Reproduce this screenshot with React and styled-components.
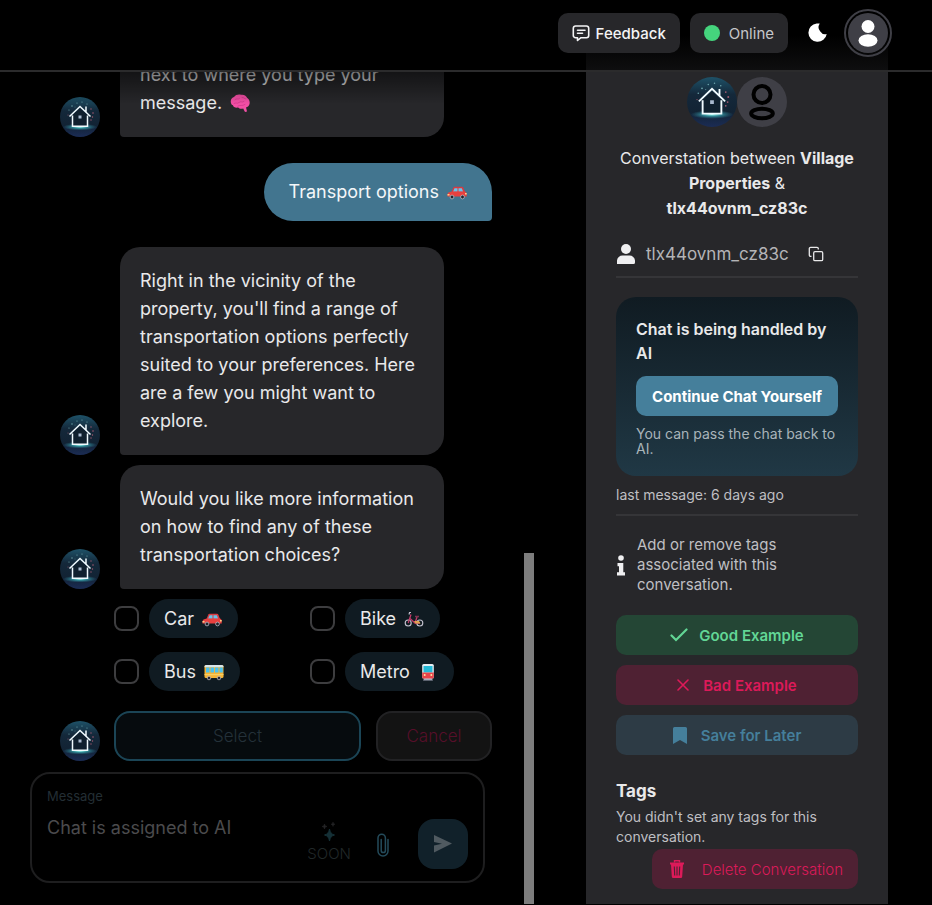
import React, { useId } from "react";
import styled, { createGlobalStyle, css } from "styled-components";

const GlobalStyle = createGlobalStyle`
  *, *::before, *::after { box-sizing: border-box; }
  body {
    margin: 0;
    background: #000;
    color: #e9e9ea;
    font-family: Inter, "Open Sans", sans-serif;
    overflow: hidden;
  }
  button, input, textarea { font: inherit; color: inherit; }
  button { border: 0; background: none; padding: 0; cursor: pointer; }
  svg { display: block; flex: none; }
  h1, h2, h3, p { margin: 0; }
`;

/* ---------- layout ---------- */

const Page = styled.div`
  display: flex;
  flex-direction: column;
  height: 100vh;
  padding-bottom: 1px;
`;

const Header = styled.header`
  flex: none;
  display: flex;
  align-items: center;
  justify-content: flex-end;
  height: 72px;
  padding: 0 40px 4px 0;
  border-bottom: 2px solid #2b2b2c;
  background: linear-gradient(to bottom, transparent 50%, #0e0e0f) right 44px top / 302px 100% no-repeat;
  background-clip: padding-box;
  background-origin: padding-box;
`;

const Main = styled.main`
  flex: 1;
  min-height: 0;
  display: flex;
  padding-right: 44px;
`;

const Chat = styled.section`
  flex: 1;
  min-width: 0;
  display: flex;
  flex-direction: column;
  justify-content: flex-end;
  overflow: hidden;
  position: relative;
  padding-bottom: 21px;
  &::before {
    content: "";
    position: absolute;
    inset: 0 0 auto 0;
    height: 32px;
    background: linear-gradient(to bottom, rgba(0, 0, 0, 0.5), rgba(0, 0, 0, 0));
    z-index: 1;
  }
`;

const ScrollTrack = styled.div`
  flex: none;
  width: 10px;
  margin-right: 52px;
  display: flex;
  align-items: flex-end;
`;

const ScrollThumb = styled.div`
  width: 100%;
  height: 42.2%;
  background: #7d7d7d;
`;

/* ---------- header ---------- */

const HeaderButton = styled.button`
  display: flex;
  align-items: center;
  justify-content: center;
  gap: ${(p) => p.$gap}px;
  height: 40px;
  margin-right: 10px;
  padding: 0 14px;
  border-radius: 10px;
  background: #27272a;
  color: ${(p) => p.$color};
  font-size: 15px;
  font-weight: ${(p) => p.$weight};
`;

const StatusDot = styled.span`
  width: 16px;
  height: 16px;
  border-radius: 50%;
  background: #45d47d;
`;

const ThemeButton = styled.button`
  padding: 10px;
`;

const ProfileButton = styled.button`
  display: grid;
  place-items: center;
  width: 48px;
  height: 48px;
  margin-left: 6px;
  border: 2px solid #3f3f46;
  border-radius: 50%;
`;

const ProfileFace = styled.span`
  display: grid;
  place-items: center;
  width: 40px;
  height: 40px;
  border-radius: 50%;
  background: #3f3f46;
`;

/* ---------- messages ---------- */

const Thread = styled.div`
  flex: none;
  display: flex;
  flex-direction: column;
  padding: 0 32px 0 60px;
`;

const MessageRow = styled.div`
  display: flex;
  align-items: flex-end;
  gap: 20px;
  margin-bottom: ${(p) => p.$after}px;
  justify-content: ${(p) => (p.$own ? "flex-end" : "flex-start")};
`;

const Bubble = styled.div`
  padding: 20px;
  line-height: 28px;
  font-size: 18px;
  ${(p) =>
    p.$own
      ? css`
          padding: 15px 25px;
          background: #42758f;
          color: #f4f7f9;
          border-radius: 29px 29px 4px 29px;
        `
      : css`
          width: 324px;
          background: #27272a;
          border-radius: 20px 20px 20px 4px;
        `}
`;

const EmojiSlot = styled.span`
  display: inline-block;
  vertical-align: -4px;
  margin-left: 8px;
`;

const Options = styled.fieldset`
  display: grid;
  grid-template-columns: repeat(2, 196px);
  row-gap: 14px;
  margin: 0 0 20px 54px;
  padding: 0;
  border: 0;
`;

const Option = styled.label`
  display: flex;
  align-items: center;
  gap: 10px;
`;

const Tick = styled.input`
  appearance: none;
  width: 25px;
  height: 25px;
  margin: 0;
  border: 2px solid #3d3d3f;
  border-radius: 8px;
  &:checked { background: #42758f; }
`;

const Pill = styled.span`
  display: flex;
  align-items: center;
  height: 39px;
  padding: 0 16px 0 15px;
  border-radius: 20px;
  background: #101b22;
  font-size: 18px;
`;

const Actions = styled.div`
  flex: 1;
  display: flex;
  gap: 15px;
  margin-left: -6px;
`;

const ActionButton = styled.button`
  height: 50px;
  border-radius: 16px;
  font-size: 17px;
  font-weight: 300;
  ${(p) =>
    p.$primary
      ? css`
          flex: 1;
          border: 2px solid #1b4556;
          background: #060b0e;
          color: #243139;
        `
      : css`
          width: 116px;
          border: 2px solid #222224;
          background: #131313;
          color: #570f2a;
        `}
`;

/* ---------- composer ---------- */

const Composer = styled.form`
  flex: none;
  display: flex;
  align-items: flex-end;
  margin: 0 39px 0 30px;
  padding: 12px 15px;
  height: 111px;
  border: 2px solid #1e1e1f;
  border-radius: 20px;
`;

const Field = styled.label`
  flex: 1;
  min-width: 0;
  align-self: stretch;
  display: flex;
  flex-direction: column;
  gap: 9px;
  color: #232e34;
  font-size: 13px;
  line-height: 20px;
`;

const MessageBox = styled.textarea`
  flex: 1;
  width: 100%;
  padding: 0;
  border: 0;
  outline: 0;
  resize: none;
  background: transparent;
  font-size: 18px;
  line-height: 26px;
  &::placeholder { color: #4b4b4d; opacity: 1; }
`;

const SoonButton = styled.button`
  display: flex;
  flex-direction: column;
  align-items: center;
  gap: 2px;
  margin: 0 26px 5px 0;
  color: #202829;
  font-size: 15px;
  font-weight: 300;
  line-height: 20px;
`;

const AttachButton = styled.button`
  margin: 0 29px 12px 0;
`;

const SendButton = styled.button`
  display: grid;
  place-items: center;
  width: 50px;
  height: 50px;
  border-radius: 16px;
  background: #11212a;
`;

/* ---------- side panel ---------- */

const Side = styled.aside`
  flex: none;
  width: 302px;
  padding: 5px 30px 15px;
  background: #27272a;
  overflow: hidden;
  display: flex;
  flex-direction: column;
`;

const Pair = styled.div`
  display: flex;
  justify-content: center;
`;

const GuestAvatar = styled.div`
  display: grid;
  place-items: center;
  width: 50px;
  height: 50px;
  border-radius: 50%;
  background: #3f3f46;
`;

const PairTitle = styled.h1`
  margin-top: 19px;
  text-align: center;
  font-size: 16px;
  font-weight: 400;
  line-height: 25px;
`;

const Identity = styled.div`
  display: flex;
  align-items: center;
  height: 57px;
  margin-bottom: 19px;
  padding-top: 10px;
  border-bottom: 2px solid #353538;
  font-size: 17px;
  color: #b4b4b7;
`;

const IdentityName = styled.span`
  margin: 0 19px 0 10px;
`;

const HandlingCard = styled.section`
  padding: 20px;
  border-radius: 20px;
  background: linear-gradient(to bottom, #101b22, #203845);
`;

const CardTitle = styled.h2`
  font-size: 16px;
  font-weight: 600;
  line-height: 24px;
`;

const ContinueButton = styled.button`
  width: 100%;
  height: 40px;
  margin: 11px 0 10px;
  border-radius: 10px;
  background: #457f9b;
  color: #fff;
  font-size: 15px;
  font-weight: 700;
  white-space: nowrap;
`;

const CardNote = styled.p`
  color: #a9b4ba;
  font-size: 14px;
  line-height: 15px;
`;

const LastMessage = styled.p`
  padding: 9px 0 9px;
  border-bottom: 2px solid #353538;
  color: #bfbfc2;
  font-size: 14px;
  line-height: 20px;
`;

const Hint = styled.div`
  display: flex;
  align-items: center;
  gap: 11px;
  margin: 19px 0 20px;
  padding-right: 40px;
  color: #bfbfc2;
  font-size: 15px;
  line-height: 20px;
`;

const tones = {
  good: ["#244635", "#62d695"],
  bad: ["#4f2133", "#dc1a59"],
  save: ["#2d3b45", "#457f9b"],
};

const TagButton = styled.button`
  flex: none;
  display: flex;
  align-items: center;
  justify-content: center;
  gap: ${(p) => p.$gap}px;
  height: 40px;
  padding: 0 15px;
  border-radius: 10px;
  background: ${(p) => tones[p.$tone][0]};
  color: ${(p) => tones[p.$tone][1]};
  font-size: 15px;
  font-weight: 600;
  white-space: nowrap;
`;

const DeleteButton = styled(TagButton)`
  align-self: flex-end;
  padding-left: 18px;
  font-weight: 300;
`;

const TagStack = styled.div`
  display: flex;
  flex-direction: column;
  gap: 10px;
`;

const TagsTitle = styled.h2`
  margin: 24px 0 4px;
  font-size: 17px;
  font-weight: 700;
  line-height: 24px;
`;

const TagsNote = styled.p`
  margin-bottom: 2px;
  color: #bfbfc2;
  font-size: 14px;
  line-height: 20px;
`;

/* ---------- drawings ---------- */

function HouseAvatar({ size = 40 }) {
  const id = useId();
  return (
    <svg width={size} height={size} viewBox="0 0 40 40" role="img" aria-label="Village Properties">
      <defs>
        <linearGradient id={`${id}s`} x1="0" y1="0" x2="0" y2="1">
          <stop offset="0" stopColor="#1e5268" />
          <stop offset="0.35" stopColor="#14283a" />
          <stop offset="0.7" stopColor="#122334" />
          <stop offset="1" stopColor="#1b2c55" />
        </linearGradient>
        <radialGradient id={`${id}g`}>
          <stop offset="0" stopColor="#a6fff5" />
          <stop offset="0.4" stopColor="#3aa5ae" stopOpacity="0.8" />
          <stop offset="1" stopColor="#2a7c92" stopOpacity="0" />
        </radialGradient>
        <clipPath id={`${id}c`}><circle cx="20" cy="20" r="20" /></clipPath>
      </defs>
      <g clipPath={`url(#${id}c)`}>
        <rect width="40" height="40" fill={`url(#${id}s)`} />
        <g fill="#6fa8ae">
          <circle cx="12" cy="9" r="0.7" /><circle cx="17" cy="6" r="0.6" /><circle cx="22" cy="5" r="0.6" />
          <circle cx="9" cy="13" r="0.6" /><circle cx="27" cy="7" r="0.6" /><circle cx="15" cy="10" r="0.4" />
        </g>
        <g fill="#a15a70">
          <circle cx="31" cy="12" r="0.7" /><circle cx="33" cy="16" r="0.8" /><circle cx="32.500" cy="20" r="0.7" />
          <circle cx="31" cy="23" r="0.7" /><circle cx="8" cy="18" r="0.5" />
        </g>
        <ellipse cx="20" cy="30" rx="17" ry="3.500" fill={`url(#${id}g)`} />
        <path d="M12.500 18.500V29h15V18.500L20 11.500Z" fill="#10202e" />
        <path d="M9.500 19.500 20 9.500l10.500 10M26 15V9.500M12.500 18.500V29.300h15V18.500" fill="none" stroke="#f1fbff" strokeWidth="1.500" />
        <path d="M18.500 18.500h3v3h-3z" fill="#a9b9ce" />
      </g>
    </svg>
  );
}

const FeedbackIcon = () => (
  <svg width="18" height="18" viewBox="0 0 18 18" fill="none" stroke="currentColor" strokeWidth="1.600" strokeLinejoin="round" strokeLinecap="round">
    <path d="M3.500 2h11A2.200 2.200 0 0 1 16.700 4.200v7.300a2.200 2.200 0 0 1-2.200 2.200H9L5.500 16.500v-2.800h-2a2.200 2.200 0 0 1-2.200-2.200V4.200A2.200 2.200 0 0 1 3.500 2Z" />
    <path d="M5.500 6.200h7.500M5.500 9.300h5" />
  </svg>
);

const MoonIcon = () => (
  <svg width="20" height="20" viewBox="0 0 20 20" fill="#fff">
    <path d="M9 1A9.200 9.200 0 1 0 19 11.500 5.800 5.800 0 0 1 12.600 9 6.800 6.800 0 0 1 12 1Z" transform="translate(-.3 -.5)" />
  </svg>
);

const FaceIcon = () => (
  <svg width="20" height="28" viewBox="0 0 20 28" fill="#fff">
    <circle cx="10" cy="7.500" r="6.500" />
    <ellipse cx="10" cy="21.500" rx="9.500" ry="6.200" />
  </svg>
);

const GuestIcon = () => (
  <svg width="28" height="38" viewBox="0 0 28 38" fill="none" stroke="#000" strokeWidth="4">
    <circle cx="14" cy="11.500" r="8.500" />
    <ellipse cx="14" cy="30.500" rx="10.800" ry="4.700" />
  </svg>
);

const PersonIcon = () => (
  <svg width="20" height="22" viewBox="0 0 20 22" fill="#efeff1">
    <circle cx="10" cy="6" r="5" />
    <path d="M1 21v-3.500A5.500 5.500 0 0 1 6.500 12.500h7A5.500 5.500 0 0 1 19 17.500V19.500a1.500 1.500 0 0 1-1.500 1.500Z" />
  </svg>
);

const CopyIcon = () => (
  <svg width="16" height="16" viewBox="0 0 16 16" fill="none" stroke="#e9e9ea" strokeWidth="1.300" strokeLinejoin="round">
    <rect x="5.700" y="5.700" width="9" height="9" rx="1.300" />
    <path d="M3.500 10.300H2.600A1.300 1.300 0 0 1 1.300 9V2.600A1.300 1.300 0 0 1 2.600 1.300H9a1.300 1.300 0 0 1 1.300 1.300v.9" />
  </svg>
);

const InfoIcon = () => (
  <svg width="10" height="21" viewBox="0 0 10 21" fill="#efeff1">
    <circle cx="5" cy="3" r="2.800" />
    <path d="M1.500 8h5.800v9.200H9V20.500H1v-3.300h2v-6H1.500Z" />
  </svg>
);

const CheckIcon = () => (
  <svg width="18" height="14" viewBox="0 0 18 14" fill="none" stroke="currentColor" strokeWidth="2.200" strokeLinecap="round">
    <path d="m1.500 7.500 4.500 4.500L16.500 1.500" />
  </svg>
);

const CrossIcon = () => (
  <svg width="12" height="12" viewBox="0 0 12 12" stroke="currentColor" strokeWidth="1.600" strokeLinecap="round">
    <path d="m1 1 10 10M11 1 1 11" />
  </svg>
);

const BookmarkIcon = () => (
  <svg width="14" height="17" viewBox="0 0 14 17" fill="currentColor">
    <path d="M1.500 0h11A1.500 1.500 0 0 1 14 1.500V17l-7-4-7 4V1.500A1.500 1.500 0 0 1 1.500 0Z" />
  </svg>
);

const TrashIcon = () => (
  <svg width="14" height="18" viewBox="0 0 14 18">
    <path d="M4.500 2.500V.8h5v1.700" fill="none" stroke="currentColor" strokeWidth="1.400" />
    <path d="M0 2.500h14v2H13L12.200 16.500A1.500 1.500 0 0 1 10.700 18H3.300A1.500 1.500 0 0 1 1.800 16.500L1 4.500H0Z" fill="currentColor" />
    <path d="M4.300 6.500l.4 9M7 6.500v9M9.700 6.500l-.4 9" stroke="#4f2133" strokeWidth="1.100" />
  </svg>
);

const SparkIcon = () => (
  <svg width="16" height="20" viewBox="0 0 16 20">
    <path d="M8.500 7c.7 3.700 1.800 5 5 6-3.200 1-4.300 2.300-5 6-.7-3.700-1.800-5-5-6 3.200-1 4.300-2.300 5-6Z" fill="#153036" stroke="#153036" strokeWidth="1" />
    <path d="M3.500 2c.3 1.600.8 2.100 2.500 2.500-1.700.4-2.200.9-2.500 2.500C3.200 5.400 2.700 4.900 1 4.500 2.700 4.100 3.200 3.600 3.500 2ZM12 0c.2 1.400.6 1.800 2 2.200-1.400.4-1.800.8-2 2.200-.2-1.400-.6-1.800-2-2.200 1.400-.4 1.800-.8 2-2.200Z" fill="#252527" stroke="#252527" strokeWidth=".6" />
  </svg>
);

const ClipIcon = () => (
  <svg width="12" height="24" viewBox="0 0 12 24" fill="none" stroke="#244b5b" strokeWidth="1.500" strokeLinecap="round">
    <path d="M11 6.500V18a5 5 0 0 1-10 0V5a3.700 3.700 0 0 1 7.400 0v12.500a2.100 2.100 0 0 1-4.200 0V6.500" />
  </svg>
);

const SendIcon = () => (
  <svg width="18" height="18" viewBox="0 0 18 18" fill="#505a60">
    <path d="M0 0 18 8.500 0 17.500V10.500L8 8.700 0 7Z" />
  </svg>
);

const emojiArt = {
  car: (
    <>
      <path d="M4.500 10 6.300 5.600Q6.700 4.800 7.700 4.800H15Q16 4.800 16.400 5.700L18 10Z" fill="#d93a40" />
      <path d="M6 9.800 7.500 6.300h3v3.500ZM11.500 9.800V6.300h3.300l1.400 3.500Z" fill="#68c3ea" />
      <path d="M.5 14.500v-2.300Q.5 10.500 3 10L5 9.500h13.200Q19.700 10 19.700 12v2.500Z" fill="#e8403f" />
      <path d="M.5 12h2v1.500h-2zM18 11h1.700v1.500H18z" fill="#ffd08a" />
      <g fill="#24232b" stroke="#c9c9d6" strokeWidth=".7"><circle cx="5" cy="15" r="1.900" /><circle cx="15.500" cy="15" r="1.900" /></g>
    </>
  ),
  bus: (
    <>
      <rect x=".5" y="3" width="19" height="13" rx="1.500" fill="#f5b335" />
      <path d="M.5 4.500Q.5 3 2 3h16q1.500 0 1.500 1.500v.7H.5Z" fill="#d9e5ea" />
      <path d="M2 5.500h3.500v5H2zM6.500 5.500H10v5H6.500zM11 5.500h3.500v5H11zM15.500 5.500h3.300v5h-3.300z" fill="#4bc1ee" />
      <path d="M.5 12h19v1.200H.5z" fill="#f8ce63" />
      <g fill="#292530" stroke="#ddd" strokeWidth=".6"><circle cx="5" cy="16" r="1.800" /><circle cx="15" cy="16" r="1.800" /></g>
    </>
  ),
  bike: (
    <>
      <g fill="none" stroke="#c4c2cf" strokeWidth="1.100"><circle cx="4.200" cy="14" r="3" /><circle cx="15.800" cy="14" r="3" /><path d="M7 3.500H5.500l-.5 2" /></g>
      <path d="M4.200 14 7 5.500M6 9.500l5 4.500 2-6M11 14h5" fill="none" stroke="#c23b68" strokeWidth="1.300" />
      <path d="M10 12h5l1.500 2.500h-5Z" fill="#e0a451" />
      <path d="M11 7.500h4" stroke="#7c3550" strokeWidth="1.500" />
    </>
  ),
  metro: (
    <>
      <path d="m5 18.500 1.500-2.500h7l1.500 2.500Z" fill="#a5a9bb" />
      <rect x="4.200" y="2" width="11.600" height="14.500" rx="1.500" fill="#e6edf2" />
      <rect x="5.500" y="4" width="9" height="6.500" fill="#25b9d6" />
      <path d="M4.200 10.500h11.600V15Q15.800 16.500 14.300 16.500H5.700Q4.200 16.500 4.200 15Z" fill="#e8444a" />
      <circle cx="6.700" cy="13" r="1" fill="#ffe3a0" /><circle cx="13.300" cy="13" r="1" fill="#ffe3a0" />
    </>
  ),
  brain: (
    <>
      <path d="M1 10C0 7 2 4.500 4 4 5.500 1.500 9 1 11 1.800c3-.6 5.500 1 6 3 2.500 1.500 3.500 5 2 7.500-.8 1.500-2 2-3 2l1 4.200-2 .5-1.800-3.500c-2 .8-4 .2-5-1C5.500 15 3 14 3 12.300 1.800 12 1.200 11 1 10Z" fill="#f34fa5" />
      <path d="M5 6.500c1.500-1.500 3 .5 4.500-1M4 10.500c2-1.500 3 .7 5-1s3 .5 5-1M12 4.500c2-.5 2 1.500 4 1.500M8 13c2-1.500 4 .5 7-1.500" fill="none" stroke="#d43a8e" strokeWidth=".9" strokeLinecap="round" />
    </>
  ),
};

const Emoji = ({ name }) => (
  <EmojiSlot>
    <svg width="20" height="20" viewBox="0 0 20 20" role="img" aria-label={name}>{emojiArt[name]}</svg>
  </EmojiSlot>
);

const choices = [["Car", "car"], ["Bike", "bike"], ["Bus", "bus"], ["Metro", "metro"]];

export default function App() {
  return (
    <Page>
      <GlobalStyle />
      <Header>
        <HeaderButton type="button" $gap={6} $color="#f4f4f5" $weight={500}>
          <FeedbackIcon />Feedback
        </HeaderButton>
        <HeaderButton type="button" $gap={9} $color="#c6c6c9" $weight={400}>
          <StatusDot />Online
        </HeaderButton>
        <ThemeButton type="button" aria-label="Toggle theme"><MoonIcon /></ThemeButton>
        <ProfileButton type="button" aria-label="Profile">
          <ProfileFace><FaceIcon /></ProfileFace>
        </ProfileButton>
      </Header>

      <Main>
        <Chat>
          <Thread>
            <MessageRow $after={26}>
              <HouseAvatar />
              <Bubble>
                next to where you type your message.<Emoji name="brain" />
              </Bubble>
            </MessageRow>
            <MessageRow $own $after={26}>
              <Bubble $own>Transport options<Emoji name="car" /></Bubble>
            </MessageRow>
            <MessageRow $after={10}>
              <HouseAvatar />
              <Bubble>
                Right in the vicinity of the property, you'll find a range of transportation options
                perfectly suited to your preferences. Here are a few you might want to explore.
              </Bubble>
            </MessageRow>
            <MessageRow $after={10}>
              <HouseAvatar />
              <Bubble>
                Would you like more information on how to find any of these transportation choices?
              </Bubble>
            </MessageRow>
            <Options aria-label="Transport choices">
              {choices.map(([label, emoji]) => (
                <Option key={label}>
                  <Tick type="checkbox" />
                  <Pill>{label}<Emoji name={emoji} /></Pill>
                </Option>
              ))}
            </Options>
            <MessageRow $after={11}>
              <HouseAvatar />
              <Actions>
                <ActionButton type="button" $primary>Select</ActionButton>
                <ActionButton type="button">Cancel</ActionButton>
              </Actions>
            </MessageRow>
          </Thread>
          <Composer>
            <Field>
              Message
              <MessageBox placeholder="Chat is assigned to AI" disabled />
            </Field>
            <SoonButton type="button"><SparkIcon />SOON</SoonButton>
            <AttachButton type="button" aria-label="Attach file"><ClipIcon /></AttachButton>
            <SendButton type="button" aria-label="Send"><SendIcon /></SendButton>
          </Composer>
        </Chat>
        <ScrollTrack aria-hidden="true"><ScrollThumb /></ScrollTrack>

        <Side>
          <Pair>
            <HouseAvatar size={50} />
            <GuestAvatar><GuestIcon /></GuestAvatar>
          </Pair>
          <PairTitle>
            Converstation between <b>Village Properties</b> &amp;<br />
            <b>tlx44ovnm_cz83c</b>
          </PairTitle>
          <Identity>
            <PersonIcon />
            <IdentityName>tlx44ovnm_cz83c</IdentityName>
            <button type="button" aria-label="Copy id"><CopyIcon /></button>
          </Identity>
          <HandlingCard>
            <CardTitle>Chat is being handled by AI</CardTitle>
            <ContinueButton type="button">Continue Chat Yourself</ContinueButton>
            <CardNote>You can pass the chat back to AI.</CardNote>
          </HandlingCard>
          <LastMessage>last message: 6 days ago</LastMessage>
          <Hint>
            <InfoIcon />
            <p>Add or remove tags associated with this conversation.</p>
          </Hint>
          <TagStack>
            <TagButton type="button" $tone="good" $gap={11}><CheckIcon />Good Example</TagButton>
            <TagButton type="button" $tone="bad" $gap={14}><CrossIcon />Bad Example</TagButton>
            <TagButton type="button" $tone="save" $gap={14}><BookmarkIcon />Save for Later</TagButton>
          </TagStack>
          <TagsTitle>Tags</TagsTitle>
          <TagsNote>You didn't set any tags for this conversation.</TagsNote>
          <DeleteButton type="button" $tone="bad" $gap={18}><TrashIcon />Delete Conversation</DeleteButton>
        </Side>
      </Main>
    </Page>
  );
}
